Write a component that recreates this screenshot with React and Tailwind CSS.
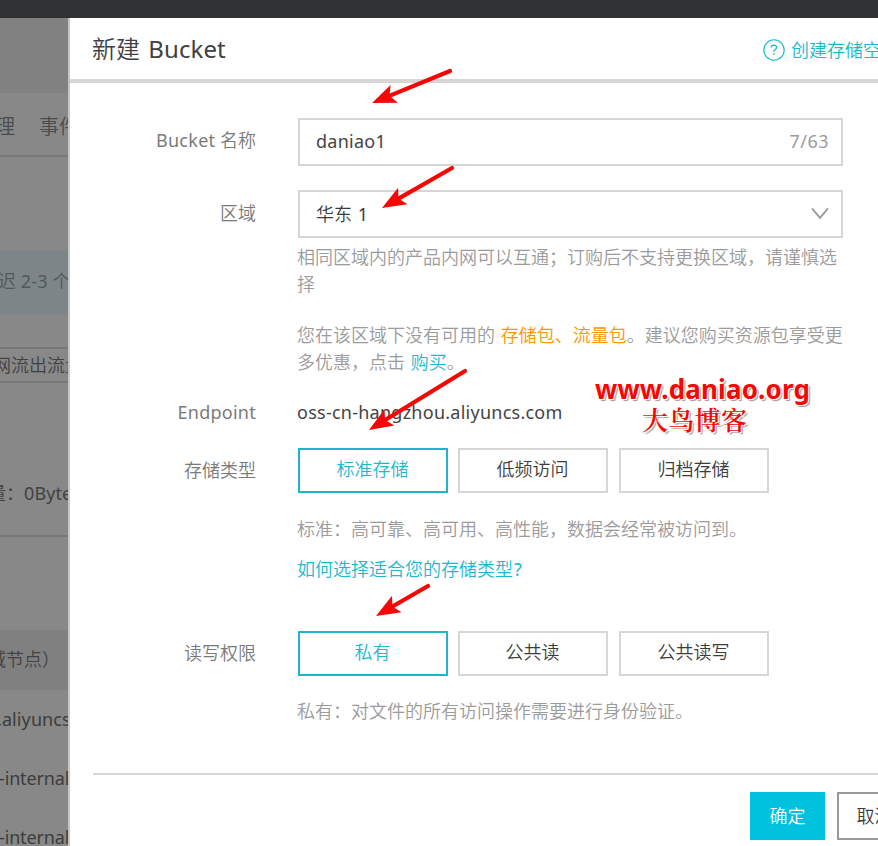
const cyan = 'border-[#1fb4cc] text-[#1fb8cf]';
const plain = 'border-[#d6d6d6] text-[#3c3c3c]';

function Latin({ children, className = 'tracking-[0.26px]' }) {
  return <span className={`font-normal ${className}`}>{children}</span>;
}

function Row({ label, labelClass, className, children }) {
  return (
    <div className={`flex ${className}`}>
      <div className={`w-[186px] shrink-0 text-right text-[#7a7a7a] ${labelClass}`}>{label}</div>
      <div className="ml-[42px] w-[546px] shrink-0">{children}</div>
    </div>
  );
}

function Options({ items }) {
  return (
    <div className="flex h-[45px] gap-[11px]">
      {items.map((item, i) => (
        <div
          key={item}
          className={`flex items-center justify-center border-2 pb-[2px] pr-px ${i === 0 ? `-mr-px ${cyan}` : plain} w-[150px]`}
        >
          {item}
        </div>
      ))}
    </div>
  );
}

function Backdrop() {
  return (
    <div className="flex w-[68px] shrink-0 flex-col overflow-hidden whitespace-nowrap bg-[#888888] text-[#4b4b4b]">
      <div className="h-[75px] shrink-0 bg-[#818181]" />
      <div className="flex h-[64px] shrink-0 gap-[24px] border-b-2 border-[#7a7a7a] pt-[3px] text-[20px] leading-[62px]">
        <span className="-ml-[5px]">理</span>
        <span>事件</span>
      </div>
      <div className="mt-[93px] h-[64px] shrink-0 bg-[#7d8588] leading-[63px] text-[#525859]">
        <div className="-ml-[2px]">迟 <Latin>2-3</Latin> 个</div>
      </div>
      <div className="mt-[33px] h-[36px] shrink-0 border-y-2 border-[#767676] leading-[33px] text-[#414141]">
        <div className="-ml-[7px]">网流出流量</div>
      </div>
      <div className="mt-[96px] -ml-[12px] h-[31px] shrink-0 leading-[28px] text-[#414141]">量：<Latin className="tracking-[0.1px]">0Byte</Latin></div>
      <div className="mt-[25px] h-[2px] shrink-0 bg-[#777777]" />
      <div className="mt-[93px] h-[60px] shrink-0 bg-[#808080] leading-[59px] text-[#434343]">
        <div className="-ml-[12px]">域节点）</div>
      </div>
      <div className="h-[59px] shrink-0 leading-[58px] text-[#3c3c3c]"><Latin className="-ml-[3px] tracking-[0.1px]">.aliyuncs</Latin></div>
      <div className="h-[59px] shrink-0 leading-[59px] text-[#3c3c3c]"><Latin className="-ml-px tracking-[-0.15px]">-internal</Latin></div>
      <div className="h-[59px] shrink-0 leading-[59px] text-[#3c3c3c]"><Latin className="-ml-px tracking-[-0.15px]">-internal</Latin></div>
    </div>
  );
}

function Arrow({ x, y, tx, ty }) {
  const length = Math.hypot(tx - x, ty - y);
  const angle = (Math.atan2(ty - y, tx - x) * 180) / Math.PI;
  return (
    <g transform={`translate(${x} ${y}) rotate(${angle})`} fill="#f80606">
      <path d="M0 0 L24 -9.5 L20 -2 L20 2 L24 9.5 Z" />
      <path d={`M18 0 H${length}`} stroke="#f80606" strokeWidth="4.2" strokeLinecap="round" />
    </g>
  );
}

export default function App() {
  return (
    <div className="relative flex h-[846px] w-[878px] flex-col overflow-hidden bg-white font-['Noto_Sans','Noto_Sans_CJK_SC',sans-serif] text-[18px] font-[350]">
      <div className="h-[18px] shrink-0 bg-[#303133]" />
      <div className="flex min-h-0 flex-1">
        <Backdrop />
        <main className="min-w-0 flex-1 overflow-hidden whitespace-nowrap border-l-2 border-[#c5c5c5]">
          <header className="flex h-[65px] border-b-4 border-[#d6d6d6]">
            <h1 className="w-[693px] shrink-0 pl-[22px] text-[24px] leading-[62px] text-[#404043]">
              新建 <Latin className="ml-[2px] tracking-[0.1px]">Bucket</Latin>
            </h1>
            <div className="flex h-[64px] shrink-0 items-center gap-[6px] text-[#14bccb]">
              <svg width="22" height="22" viewBox="0 0 22 22" fill="none" stroke="currentColor" strokeWidth="1.1">
                <circle cx="11" cy="11" r="10.2" />
                <path d="M8.2 8.6 C8.2 5.4 13.6 5.4 13.6 8.5 C13.6 10.6 10.8 10.6 10.8 12.8" strokeWidth="1.3" />
                <path d="M10.8 14.2 V15.7" strokeWidth="1.4" />
              </svg>
              <span>创建存储空间</span>
            </div>
          </header>

          <Row className="mt-[35px]" labelClass="leading-[45px]" label={<><Latin>Bucket</Latin> 名称</>}>
            <div className="flex h-[48px] w-[545px] justify-between border-2 border-[#d6d6d6] pl-[16px] pr-[12px] leading-[43px] text-[#444]">
              <Latin>daniao1</Latin>
              <Latin className="tracking-[0.5px] text-[#9b9b9b]">7/63</Latin>
            </div>
          </Row>

          <Row className="mt-[24px]" labelClass="leading-[46px]" label="区域">
            <div className="flex h-[48px] w-[545px] items-center justify-between border-2 border-[#d6d6d6] pl-[16px] pr-[12px] text-[#3c3c3c]">
              <span>华东 <Latin className="ml-px">1</Latin></span>
              <svg width="18" height="12" viewBox="0 0 18 12" fill="none" stroke="#999" strokeWidth="1.9">
                <path d="M1 0.5 L9 9.8 L17 0.5" />
              </svg>
            </div>
            <div className="-ml-px mt-[6px] leading-[27px] text-[#9b9b9b]">
              <p>相同区域内的产品内网可以互通；订购后不支持更换区域，请谨慎选<br />择</p>
              <p className="mt-[24px]">
                您在该区域下没有可用的 <span className="ml-px text-[#ff9500]">存储包、流量包</span>。建议您购买资源包享受更<br />
                多优惠，点击 <span className="ml-px text-[#12bdd0]">购买</span>。
              </p>
            </div>
          </Row>

          <Row className="mt-[22px] h-[28px] leading-[28px]" label={<Latin>Endpoint</Latin>}>
            <Latin className="-ml-px tracking-[0.25px] text-[#444]">oss-cn-hangzhou.aliyuncs.com</Latin>
          </Row>

          <Row className="mt-[22px] h-[183px]" labelClass="leading-[45px]" label="存储类型">
            <Options items={['标准存储', '低频访问', '归档存储']} />
            <p className="-ml-px mt-[23px] leading-[27px] text-[#9b9b9b]">标准：高可靠、高可用、高性能，数据会经常被访问到。</p>
            <p className="-ml-px mt-[13px] leading-[27px] text-[#19bace]">如何选择适合您的存储类型<Latin className="ml-px">?</Latin></p>
          </Row>

          <Row className="h-[142px]" labelClass="leading-[45px]" label="读写权限">
            <Options items={['私有', '公共读', '公共读写']} />
            <p className="-ml-px mt-[22px] leading-[27px] text-[#9b9b9b]">私有：对文件的所有访问操作需要进行身份验证。</p>
          </Row>

          <footer className="ml-[23px] flex gap-[12px] border-t-2 border-[#d6d6d6] pl-[657px] pt-[17px]">
            <div className="flex h-[48px] w-[75px] shrink-0 items-center justify-center bg-[#00c1de] text-white">确定</div>
            <div className="flex h-[48px] w-[75px] shrink-0 items-center justify-center border-2 border-[#999] text-[#3c3c3c]">取消</div>
          </footer>
        </main>
      </div>

      <div className="absolute left-[595px] top-[374px] w-[218px] font-bold text-[#f80606] [text-shadow:-1px_-1px_0_#fff,1px_1px_0_#fff,2px_2px_1px_#999]">
        <div className="whitespace-nowrap text-[26px] leading-[30px] tracking-[0.15px]">www.daniao.org</div>
        <div className="pl-[47px] font-['Noto_Serif_CJK_SC','Noto_Sans_CJK_SC',serif] text-[26px] font-semibold leading-[30px] tracking-[0.3px]">大鸟博客</div>
      </div>
      <svg className="pointer-events-none absolute inset-0" width="878" height="846" viewBox="0 0 878 846">
        <Arrow x={372} y={103} tx={450} ty={71} />
        <Arrow x={382} y={208} tx={452} ty={168} />
        <Arrow x={369} y={430} tx={465} ty={371} />
        <Arrow x={376} y={616} tx={428} ty={586} />
      </svg>
    </div>
  );
}
